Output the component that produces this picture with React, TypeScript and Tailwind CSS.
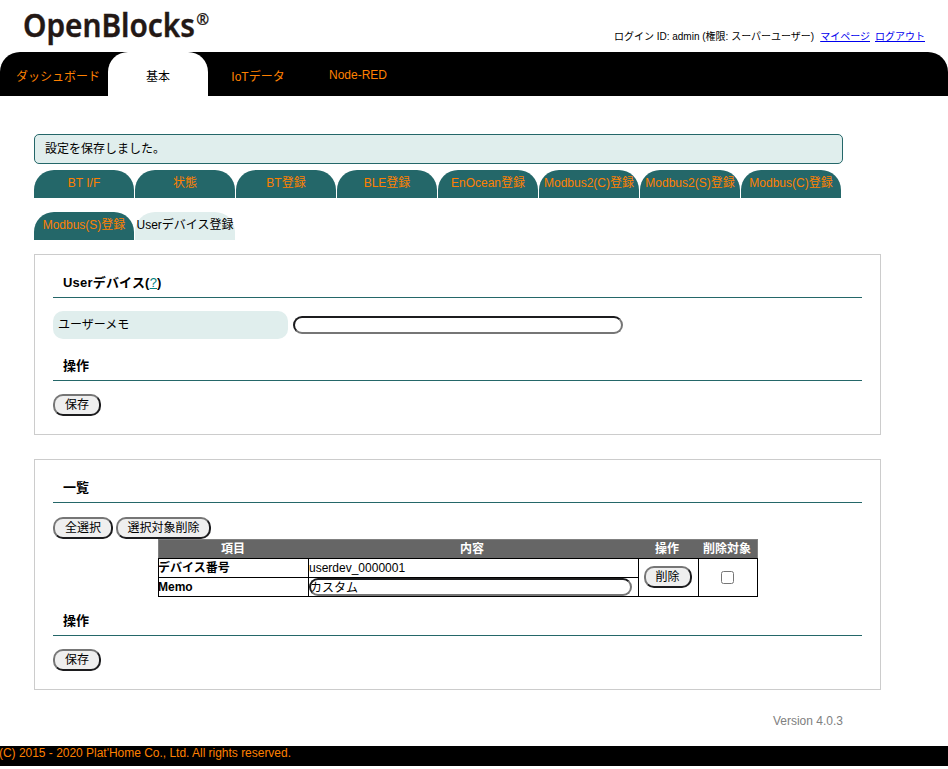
import type { ReactNode } from "react";

const NAV = ["ダッシュボード", "基本", "IoTデータ", "Node-RED"];
const TABS_TOP = ["BT I/F", "状態", "BT登録", "BLE登録", "EnOcean登録", "Modbus2(C)登録", "Modbus2(S)登録", "Modbus(C)登録"];
const TABS_BOTTOM = ["Modbus(S)登録", "Userデバイス登録"];
const ACTIVE_TAB = "Userデバイス登録";

function Button({ children, className }: { children: ReactNode; className: string }) {
  return (
    <button
      className={`h-[22px] shrink-0 rounded-[10px] border-2 border-t-[#767676] border-l-[#767676] border-r-[#1c1c1e] border-b-[#1c1c1e] bg-[#efefef] text-center leading-[17px] whitespace-nowrap ${className}`}
    >
      {children}
    </button>
  );
}

function Field({ value, className }: { value: string; className: string }) {
  return (
    <input
      type="text"
      defaultValue={value}
      className={`block h-[18px] rounded-[10px] border-2 border-t-[#1c1c1e] border-l-[#1c1c1e] border-r-[#767676] border-b-[#767676] bg-white pb-px -indent-px leading-[13px] outline-none ${className}`}
    />
  );
}

function Heading({ children }: { children: ReactNode }) {
  return (
    <h2 className="h-[26px] border-b border-[#246769] pl-[10px] text-[13px] leading-[21px] font-bold">{children}</h2>
  );
}

function TabRow({ tabs }: { tabs: string[] }) {
  return (
    <ul className="flex h-7 gap-px">
      {tabs.map((tab) => (
        <li
          key={tab}
          className={`h-7 w-[100px] rounded-t-[20px] text-center leading-[26px] whitespace-nowrap ${
            tab === ACTIVE_TAB ? "bg-[#e0eeed] text-black" : "bg-[#246769] text-[#ff8000]"
          }`}
        >
          {tab}
        </li>
      ))}
    </ul>
  );
}

export default function App() {
  return (
    <div className="h-[769px] overflow-hidden bg-white font-['Liberation_Sans','Noto_Sans_CJK_JP',sans-serif] text-[12px] text-black">
      <header className="flex h-[52px] justify-between pr-[23px] pl-[20px]">
        <svg width="200" height="52" role="img" aria-label="OpenBlocks">
          <text className="fill-[#231815] stroke-[#231815] stroke-[0.4] font-['Noto_Sans',sans-serif] text-[32px] font-semibold">
            <tspan x="3" y="36.5" textLength="172" lengthAdjust="spacingAndGlyphs">OpenBlocks</tspan>
            <tspan x="176.3" y="25" className="stroke-[0.2] text-[15.5px]">®</tspan>
          </text>
        </svg>
        <p className="flex pt-[29px] text-[10px] leading-[15px] whitespace-nowrap">
          <span>ログイン ID: admin (権限: スーパーユーザー)</span>
          <a href="#mypage" className="ml-[6px] text-[#0000ee] underline">マイページ</a>
          <a href="#logout" className="ml-[5px] text-[#0000ee] underline">ログアウト</a>
        </p>
      </header>

      <nav className="flex h-11 rounded-t-[20px] bg-black pl-2">
        {NAV.map((item) => (
          <a
            key={item}
            href="#nav"
            className={`h-11 w-[100px] text-center ${item === "Node-RED" ? "leading-[46px]" : "leading-[50px]"} ${
              item === "基本" ? "rounded-t-[20px] bg-white text-black" : "text-[#ff8000]"
            }`}
          >
            {item}
          </a>
        ))}
      </nav>

      <main className="w-[881px] pt-[38px] pl-[34px]">
        <p className="mb-[6px] h-[30px] w-[809px] rounded-[5px] border border-[#246769] bg-[#e0eeed] pl-[10px] leading-[28px]">
          設定を保存しました。
        </p>
        <TabRow tabs={TABS_TOP} />
        <div className="h-[14px]" />
        <TabRow tabs={TABS_BOTTOM} />

        <section className="mt-[14px] h-[181px] border border-[#cccccc] px-[18px] pt-[17px]">
          <Heading>
            <span className="tracking-[0.2px]">
              Userデバイス(<a href="#help" className="font-normal text-[#008080] underline">?</a>)
            </span>
          </Heading>
          <div className="mt-[13px] mb-[16px] flex h-7 items-center gap-[5px]">
            <label className="h-7 w-[235px] rounded-[10px] bg-[#e0eeed] pl-[5px] leading-[28px]">ユーザーメモ</label>
            <Field value="" className="w-[330px]" />
          </div>
          <Heading>操作</Heading>
          <div className="mt-[13px] flex">
            <Button className="w-12">保存</Button>
          </div>
        </section>

        <section className="mt-[24px] h-[231px] border border-[#cccccc] px-[18px] pt-[17px]">
          <Heading>一覧</Heading>
          <div className="mt-[14px] flex gap-[3px]">
            <Button className="w-[60px]">全選択</Button>
            <Button className="w-[95px]">選択対象削除</Button>
          </div>
          <div className="ml-[105px] w-[600px]">
            <div className="grid h-[19px] grid-cols-[148px_330px_60px_60px] border border-b-0 border-[#808080] bg-[#666666] text-center leading-[18px] font-bold text-white">
              <span>項目</span>
              <span>内容</span>
              <span>操作</span>
              <span>削除対象</span>
            </div>
            <div className="grid h-[39px] grid-cols-[150px_330px_60px_59px] grid-rows-[19px_20px] border-r border-black">
              <div className="border-t border-l border-black leading-[18px] font-bold">
                <span className="-ml-px">デバイス番号</span>
              </div>
              <div className="border-t border-l border-black leading-[18px]">userdev_0000001</div>
              <div className="row-span-2 flex items-center justify-center border border-r-0 border-black pr-[2px] pb-px">
                <Button className="w-12">削除</Button>
              </div>
              <div className="row-span-2 flex items-center justify-center border border-r-0 border-black pr-[2px]">
                <input type="checkbox" className="m-0 size-[13px]" />
              </div>
              <div className="border border-r-0 border-black leading-[18px] font-bold">
                <span className="-ml-px">Memo</span>
              </div>
              <div className="border border-r-0 border-black">
                <Field value="カスタム" className="w-[323px]" />
              </div>
            </div>
          </div>
          <div className="h-[13px]" />
          <Heading>操作</Heading>
          <div className="mt-[13px] flex">
            <Button className="w-12">保存</Button>
          </div>
        </section>
        <p className="mt-[22px] h-[34px] pr-[38px] text-right leading-[18px] text-[#808080]">Version 4.0.3</p>
      </main>
      <footer className="h-5 bg-black leading-[14px] text-[#ff8000]">
        <span className="-ml-px tracking-[-0.02px]">(C) 2015 - 2020 Plat'Home Co., Ltd. All rights reserved.</span>
      </footer>
    </div>
  );
}
